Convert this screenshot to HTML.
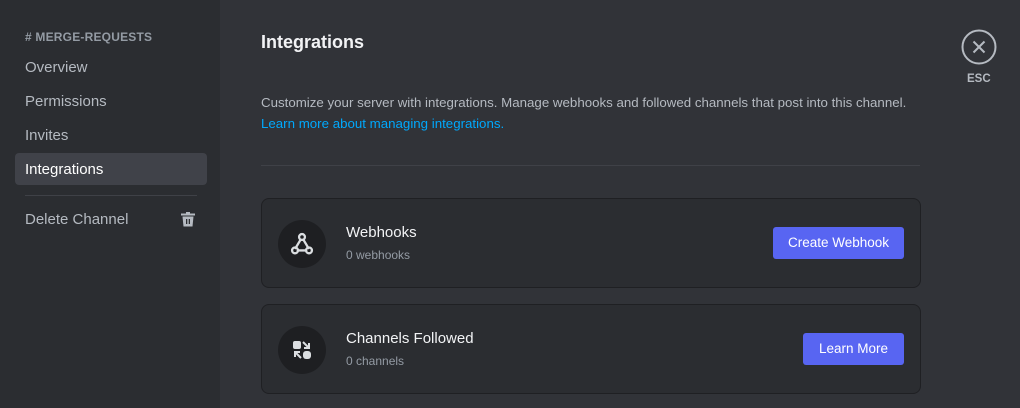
<!DOCTYPE html>
<html><head><style>
*{margin:0;padding:0;box-sizing:border-box}
body{width:1020px;height:408px;overflow:hidden;background:#313338;font-family:"Liberation Sans",sans-serif;position:relative}
.side{position:absolute;left:0;top:0;width:220px;height:408px;background:#2b2d31}
.abs{position:absolute;white-space:nowrap}
.hdr{left:25px;top:30px;font-size:12px;font-weight:bold;color:#949ba4;letter-spacing:.2px}
.it{left:25px;font-size:15px;color:#b5bac1}
.sel{position:absolute;left:15px;top:153px;width:192px;height:32px;background:#404249;border-radius:4px}
.card{position:absolute;left:261px;width:660px;height:90px;background:#2b2d31;border:1px solid #1f2023;border-radius:8px}
.ic{position:absolute;left:16px;top:21px;width:48px;height:48px;border-radius:50%;background:#1e1f22}
.ct{position:absolute;left:84px;top:25px;font-size:15px;color:#f2f3f5}
.cs{position:absolute;left:84px;top:49px;font-size:12px;color:#949ba4}
.btn{position:absolute;height:32px;background:#5865f2;border-radius:3px;color:#fff;font-size:13.5px;line-height:32px;text-align:center}
</style></head><body>
<div class="side">
<div class="abs hdr"># MERGE-REQUESTS</div>
<div class="sel"></div>
<div class="abs it" style="top:59px">Overview</div>
<div class="abs it" style="top:93px">Permissions</div>
<div class="abs it" style="top:127px">Invites</div>
<div class="abs it" style="top:161px;color:#fff">Integrations</div>
<div class="abs" style="left:25px;top:195px;width:172px;height:1px;background:#3f4147"></div>
<div class="abs it" style="top:211px">Delete Channel</div>
<svg class="abs" style="left:181px;top:212px" width="14" height="15" viewBox="0 0 14 15"><rect x="0" y="1.5" width="14" height="2" fill="#b5bac1"/><rect x="5" y="0" width="4" height="2" fill="#b5bac1"/><path d="M1.5 4.5h11l-1 10h-9z" fill="#b5bac1"/><rect x="5" y="7" width="1.3" height="5" fill="#2b2d31"/><rect x="7.7" y="7" width="1.3" height="5" fill="#2b2d31"/></svg>
</div>
<div class="abs" style="left:261px;top:32px;font-size:18px;font-weight:bold;color:#f2f3f5">Integrations</div>
<div class="abs" style="left:261px;top:95px;font-size:13.3px;color:#b5bac1">Customize your server with integrations. Manage webhooks and followed channels that post into this channel.</div>
<div class="abs" style="left:261px;top:116px;font-size:13.3px;color:#00a8fc">Learn more about managing integrations.</div>
<div class="abs" style="left:261px;top:165px;width:659px;height:1px;background:#3f4147"></div>
<div class="card" style="top:198px">
<div class="ic"><svg style="position:absolute;left:10px;top:10px" width="28" height="28" viewBox="0 0 24 24" fill="none" stroke="#dbdee1" stroke-width="2" stroke-linecap="round"><circle cx="12" cy="6" r="2.5"/><path d="M10.8 8.3 6.5 15.5"/><circle cx="6" cy="17.5" r="2.5"/><path d="M8.5 17.5h7"/><circle cx="18" cy="17.5" r="2.5"/><path d="M13.2 8.3 17.5 15.5"/></svg></div>
<div class="ct">Webhooks</div><div class="cs">0 webhooks</div>
<div class="btn" style="left:511px;top:28px;width:131px">Create Webhook</div>
</div>
<div class="card" style="top:304px">
<div class="ic"><svg style="position:absolute;left:12px;top:12px" width="24" height="24" viewBox="0 0 24 24" fill="#dbdee1"><rect x="3" y="3" width="8" height="8" rx="2"/><rect x="13" y="13" width="8" height="8" rx="3"/><path d="M13 4l6 6M19 5v5h-5" stroke="#dbdee1" stroke-width="2" fill="none"/><path d="M11 20l-6-6M5 19v-5h5" stroke="#dbdee1" stroke-width="2" fill="none"/></svg></div>
<div class="ct">Channels Followed</div><div class="cs">0 channels</div>
<div class="btn" style="left:541px;top:28px;width:101px">Learn More</div>
</div>
<svg class="abs" style="left:961px;top:29px" width="36" height="36" viewBox="0 0 36 36"><circle cx="18" cy="18" r="16.5" fill="none" stroke="#b5bac1" stroke-width="2"/><path d="M12.5 12.5l11 11M23.5 12.5l-11 11" stroke="#b5bac1" stroke-width="2"/></svg>
<div class="abs" style="left:967px;top:73px;font-size:11.5px;font-weight:bold;color:#b5bac1">ESC</div>
</body></html>
